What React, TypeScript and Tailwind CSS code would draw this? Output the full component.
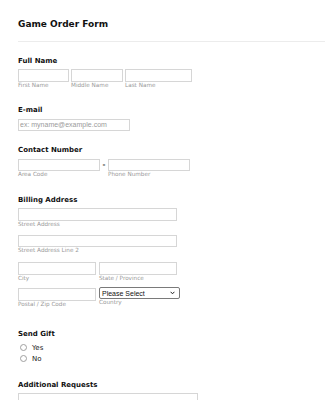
import React from "react";

const Box = ({ w, h = 12, children }: { w: number; h?: number; children?: React.ReactNode }) => (
  <div
    className="border border-[#d6d6d6] bg-white box-border flex items-center"
    style={{ width: w, height: h }}
  >
    {children}
  </div>
);

const Sub = ({ children }: { children: React.ReactNode }) => (
  <div className="text-[5.7px] leading-[6px] h-[6px] text-[#999999] whitespace-nowrap">{children}</div>
);

const Label = ({ children }: { children: React.ReactNode }) => (
  <div className="text-[7px] leading-[10px] h-[10px] font-bold text-[#111] whitespace-nowrap">{children}</div>
);

export default function App() {
  return (
    <div className="w-[325px] h-[400px] overflow-hidden bg-white font-['DejaVu_Sans',sans-serif] pl-[18px] pt-[18px]">
      <div className="text-[9px] leading-[12px] h-[12px] font-bold text-[#111]">Game Order Form</div>
      <div className="mt-[11px] border-t border-[#ececec]" />

      {/* Full Name */}
      <div className="mt-[14px]">
        <Label>Full Name</Label>
        <div className="flex gap-[2px] mt-[3px]">
          <div>
            <Box w={51} h={13} />
            <Sub>First Name</Sub>
          </div>
          <div>
            <Box w={52} h={13} />
            <Sub>Middle Name</Sub>
          </div>
          <div>
            <Box w={67} h={13} />
            <Sub>Last Name</Sub>
          </div>
        </div>
      </div>

      {/* Email */}
      <div className="mt-[17px]">
        <Label>E-mail</Label>
        <div className="mt-[4px]">
          <Box w={112} h={12}>
            <span className="pl-[1px] text-[7px] leading-[10px] text-[#9a9a9a] font-['Liberation_Sans',Arial,sans-serif] whitespace-nowrap">
              ex: myname@example.com
            </span>
          </Box>
        </div>
      </div>

      {/* Contact Number */}
      <div className="mt-[14px]">
        <Label>Contact Number</Label>
        <div className="flex mt-[4px]">
          <div>
            <Box w={82} h={12} />
            <Sub>Area Code</Sub>
          </div>
          <div className="w-[8px] h-[12px] flex items-center justify-center text-[7px] leading-[10px] font-bold text-[#333]">-</div>
          <div>
            <Box w={82} h={12} />
            <Sub>Phone Number</Sub>
          </div>
        </div>
      </div>

      {/* Billing Address */}
      <div className="mt-[18px]">
        <Label>Billing Address</Label>
        <div className="mt-[3px]">
          <Box w={159} h={13} />
          <Sub>Street Address</Sub>
        </div>
        <div className="mt-[8px]">
          <Box w={159} h={12} />
          <Sub>Street Address Line 2</Sub>
        </div>
        <div className="flex gap-[3px] mt-[9px]">
          <div>
            <Box w={78} h={13} />
            <Sub>City</Sub>
          </div>
          <div>
            <Box w={78} h={13} />
            <Sub>State / Province</Sub>
          </div>
        </div>
        <div className="flex gap-[3px] mt-[7px] items-start">
          <div>
            <Box w={78} h={13} />
            <Sub>Postal / Zip Code</Sub>
          </div>
          <div className="-mt-[1px]">
            <div className="w-[81px] h-[12px] border border-[#7a7a7a] rounded-[2px] bg-white flex items-center justify-between pl-[2px] pr-[4px] box-border">
              <span className="text-[7px] leading-[9px] text-[#111] font-['Liberation_Sans',Arial,sans-serif] whitespace-nowrap">
                Please Select
              </span>
              <svg width="5" height="4" viewBox="0 0 5 4">
                <path d="M0.6 0.8 L2.5 2.8 L4.4 0.8" fill="none" stroke="#222" strokeWidth="1" />
              </svg>
            </div>
            <Sub>Country</Sub>
          </div>
        </div>
      </div>

      {/* Send Gift */}
      <div className="mt-[22px]">
        <Label>Send Gift</Label>
        <div className="mt-[3px]">
          {["Yes", "No"].map((o) => (
            <div key={o} className="flex items-center h-[11px] pl-[2px]">
              <span className="w-[7px] h-[7px] rounded-full border border-[#a0a0a0] bg-white box-border" />
              <span className="ml-[5px] text-[7px] leading-[10px] text-[#222]">{o}</span>
            </div>
          ))}
        </div>
      </div>

      {/* Additional Requests */}
      <div className="mt-[16px]">
        <Label>Additional Requests</Label>
        <div className="mt-[3px]">
          <Box w={180} h={40} />
        </div>
      </div>
    </div>
  );
}
